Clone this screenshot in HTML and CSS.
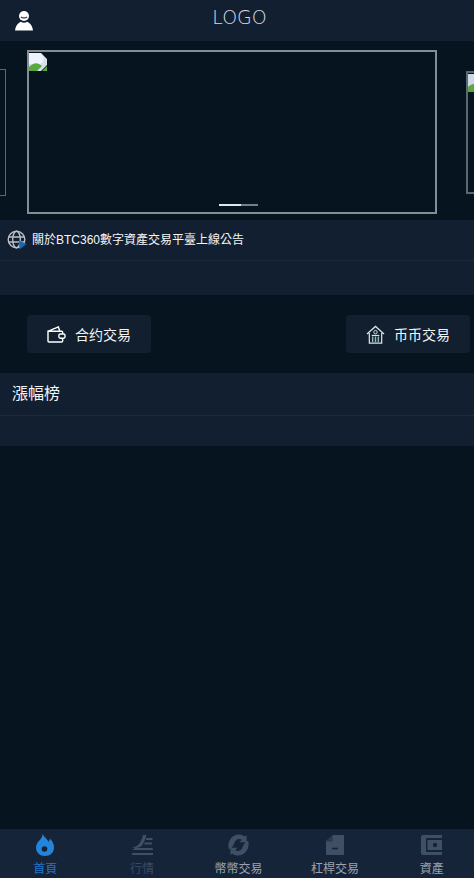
FILE: index.html
```html
<!DOCTYPE html>
<html lang="zh-Hant">
<head>
<meta charset="utf-8">
<title>LOGO</title>
<link rel="stylesheet" href="styles.css">
</head>
<body>
<div class="app">
  <header class="topbar">
    <svg class="user-icon" viewBox="0 0 18 21" width="18" height="21"><circle cx="9" cy="6" r="5" fill="#fff"/><path d="M6 6.800c1 1.500 5 1.500 6 0" fill="none" stroke="#2a3442" stroke-width="1.200"/><path d="M5.800 11.800c2 1.200 4.400 1.200 6.400 0C15 13 17.500 16 18 20.500H0C.5 16 3 13 5.800 11.800z" fill="#fff"/></svg>
    <div class="logo">LOGO</div>
  </header>

  <section class="carousel">
    <div class="slide slide-left"></div>
    <div class="slide slide-main">
      <svg class="broken" viewBox="0 0 18 18" width="18" height="18"><path d="M0 0h12l6 6v6l-6 6H0z" fill="#d5e0ee"/><path d="M0 0h11a6 6 0 0 1 0 11H0z" fill="#eef3fb"/><path d="M0 18v-4c3-3 7-5 10-3l3 2-5 5z" fill="#5ba83e"/><path d="M13 18l5-5v5z" fill="#5ba83e"/></svg>
      <div class="dots"><span class="dot-on"></span><span class="dot-off"></span></div>
    </div>
    <div class="slide slide-right">
      <svg class="broken" viewBox="0 0 18 18" width="18" height="18"><path d="M0 0h18v18H0z" fill="#cfd8e6"/><path d="M0 18v-5c3-3 8-4 11-2l7 7z" fill="#5ba83e"/></svg>
    </div>
  </section>

  <section class="notice">
    <div class="notice-row">
      <svg class="globe" viewBox="0 0 20 20" width="20" height="20"><g fill="none" stroke="#b9c0c9" stroke-width="1.400"><circle cx="9.500" cy="9.500" r="8.300"/><ellipse cx="9.500" cy="9.500" rx="3.800" ry="8.300"/><path d="M1.500 7h16M1.500 12h16"/></g><path d="M12 10.500l7.500 3.500-7 5.500z" fill="#1668b0"/></svg>
      <span class="notice-text">關於BTC360數字資產交易平臺上線公告</span>
    </div>
    <div class="notice-empty"></div>
  </section>

  <section class="actions">
    <a class="action">
      <svg viewBox="0 0 20 18" width="19" height="17"><path d="M1 5.500h14.500a1 1 0 0 1 1 1V16a1 1 0 0 1-1 1H2a1 1 0 0 1-1-1z M1 5.500c1-.5 8-3 11-4.500l1.500 4.500" fill="none" stroke="#fff" stroke-width="1.500"/><rect x="12.500" y="8.500" width="6.500" height="4.500" rx="1.500" fill="#122030" stroke="#fff" stroke-width="1.500"/></svg>
      <span>合约交易</span>
    </a>
    <a class="action">
      <svg viewBox="0 0 20 20" width="19" height="19"><path d="M1 9.500L10 1.500l9 8M3.500 8.500V19h13V8.500" fill="none" stroke="#d8e2ea" stroke-width="1.300"/><path d="M6 11h8" stroke="#d8e2ea" stroke-width="1.200"/><path d="M7 12v6M10 12v6M13 12v6" stroke="#8fb7b5" stroke-width="1.500"/><circle cx="10" cy="7.500" r="1.800" fill="none" stroke="#d8e2ea"/></svg>
      <span>币币交易</span>
    </a>
  </section>

  <section class="ranking">
    <h2 class="ranking-title">漲幅榜</h2>
    <div class="ranking-empty"></div>
  </section>

  <div class="spacer"></div>

  <nav class="tabbar">
    <a class="tab tab-active">
      <svg viewBox="0 0 18 22" width="18" height="22"><path d="M6.500 0c1.500 2 2.500 3.500 4 5 .8.800 1.700 1.800 2 2.800.7-.8 1.300-2 1.400-3.300C16.500 7 18 10 18 13.500 18 18.500 14 22 9 22S0 18.500 0 13.500C0 10 2 8 3.800 6 5.300 4.300 6.500 2.500 6.500 0z" fill="#2384dc"/><circle cx="8.500" cy="15" r="2.800" fill="#142338"/></svg>
      <span>首頁</span>
    </a>
    <a class="tab tab-dim">
      <svg viewBox="0 0 22 20" width="22" height="20"><path d="M12 0c-1 4-2.500 7.500-4.500 9.500C6 11 4 12 1 12.500c4 .8 8 .5 10-2C12.500 8.500 14.500 4 15.500 0z" fill="#3f4f66"/><path d="M15 3h6.500v2H15zM13.500 7.500H21v2h-7.500zM4 13h17.500l.5 2H1.500zM1 18h21v2H1z" fill="#3f4f66"/></svg>
      <span>行情</span>
    </a>
    <a class="tab">
      <svg viewBox="0 0 22 22" width="21" height="21"><path d="M11 0c2.500 0 4.800.8 6.600 2.200L19.500.5V8H12l2.500-2.500C11 3.500 7.500 5.500 6.500 9.500L4 14 1 15.500C-1.500 8 4 0 11 0z" fill="#3f4f66"/><path d="M11 22c-2.500 0-4.800-.8-6.600-2.200L2.500 21.500V14H10l-2.500 2.500C11 18.500 14.500 16.500 15.500 12.500L18 8l3-1.500C23.500 14 18 22 11 22z" fill="#3f4f66"/></svg>
      <span>幣幣交易</span>
    </a>
    <a class="tab">
      <svg viewBox="0 0 18 20" width="18" height="20"><path d="M7 0h10a1 1 0 0 1 1 1v18a1 1 0 0 1-1 1H1a1 1 0 0 1-1-1V6z" fill="#3f4f66"/><path d="M6.500 0v6.500H0" fill="#2a3950"/><path d="M6 13.500h6" stroke="#16243a" stroke-width="1.600"/></svg>
      <span>杠桿交易</span>
    </a>
    <a class="tab">
      <svg viewBox="0 0 21 20" width="21" height="20"><path d="M2 0h19v3H5v14h16v3H2a2 2 0 0 1-2-2V2a2 2 0 0 1 2-2z" fill="#3f4f66"/><path d="M6.500 5H21v10H6.500z" fill="#3f4f66"/><circle cx="14" cy="10" r="2.200" fill="#16243a"/></svg>
      <span>資產</span>
    </a>
  </nav>
</div>
</body>
</html>
```

FILE: styles.css
```css
* {
  box-sizing: border-box;
  margin: 0;
  padding: 0;
}

html,
body {
  height: 100%;
  overflow: hidden;
}

body {
  background: #061420;
  font-family: "Liberation Sans", "Noto Sans CJK TC", sans-serif;
  color: #fff;
}

.app {
  height: 878px;
  display: flex;
  flex-direction: column;
  overflow: hidden;
}

.topbar {
  height: 41px;
  flex: none;
  background: #121f31;
  position: relative;
  display: flex;
  align-items: center;
  justify-content: center;
}

.user-icon {
  position: absolute;
  left: 15px;
  top: 10px;
}

.logo {
  font-family: "DejaVu Sans", sans-serif;
  font-weight: 200;
  font-size: 19px;
  color: #d4dae0;
  margin-left: 5px;
  margin-top: -7px;
}

.carousel {
  height: 179px;
  flex: none;
  display: flex;
  align-items: center;
  overflow: hidden;
  padding-top: 9px;
  padding-bottom: 6px;
}

.slide {
  flex: none;
  border: 2px solid #848d93;
  position: relative;
  background: #05141f;
}

.slide-left {
  width: 100px;
  height: 127px;
  margin-left: -94px;
  border-width: 1px;
  border-color: #5d676e;
}

.slide-main {
  width: 410px;
  height: 164px;
  margin-left: 21px;
}

.slide-right {
  width: 100px;
  height: 123px;
  margin-left: 29px;
  border-color: #5d676e;
}

.broken {
  display: block;
  margin: 1px 0 0 0;
}

.dots {
  position: absolute;
  left: 190px;
  bottom: 6px;
  width: 39px;
  height: 2px;
  display: flex;
}

.dot-on {
  width: 22px;
  background: #dfe7ee;
}

.dot-off {
  width: 17px;
  background: #75818a;
}

.notice {
  flex: none;
  height: 75px;
  background: #121f31;
}

.notice-row {
  height: 41px;
  display: flex;
  align-items: center;
  padding-left: 7px;
  gap: 5px;
  border-bottom: 1px solid #1c2a3b;
}

.notice-text {
  font-size: 12px;
  line-height: 18px;
  color: #f4f6f8;
}

.actions {
  flex: none;
  height: 78px;
  display: flex;
  justify-content: space-between;
  align-items: center;
  padding: 0 4px 0 27px;
}

.action {
  width: 124px;
  height: 38px;
  background: #111f2e;
  border-radius: 4px;
  display: flex;
  align-items: center;
  justify-content: center;
  gap: 9px;
  font-size: 14px;
  color: #f4f6f8;
}

.ranking {
  flex: none;
  height: 73px;
  background: #121f31;
}

.ranking-title {
  height: 43px;
  padding-left: 12px;
  font-size: 16px;
  font-weight: 400;
  line-height: 42px;
  border-bottom: 1px solid #1c2a3b;
  color: #f4f6f8;
}

.spacer {
  flex: 1;
}

.tabbar {
  flex: none;
  height: 49px;
  background: #16243a;
  display: flex;
  margin: 0 -6px 0 -3px;
}

.tab {
  flex: 1;
  display: flex;
  flex-direction: column;
  align-items: center;
  justify-content: flex-start;
  padding-top: 5px;
  gap: 5px;
  font-size: 12px;
  line-height: 16px;
  color: #9aa3ad;
}

.tab svg {
  height: 22px;
  display: block;
}

.tab-active {
  color: #1f77c9;
}

.tab-dim {
  color: #3a4a61;
}
```
